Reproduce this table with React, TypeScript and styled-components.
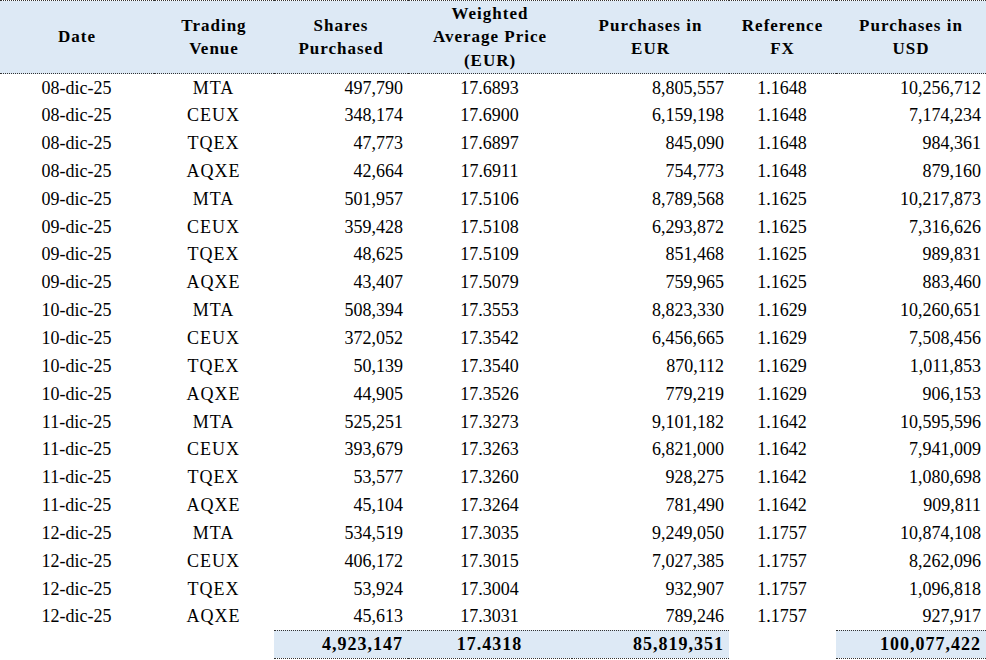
import React from "react"
import styled, { createGlobalStyle } from "styled-components"

const GlobalStyle = createGlobalStyle`
  html, body {
    margin: 0;
    padding: 0;
    background: #ffffff;
  }
  body {
    font-family: "Liberation Serif", "Times New Roman", serif;
    color: #000000;
  }
`

type Align = "left" | "center" | "right"

type Row = {
  date: string
  venue: string
  shares: string
  price: string
  eur: string
  fx: string
  usd: string
}

const rows: Row[] = [
  { date: "08-dic-25", venue: "MTA", shares: "497,790", price: "17.6893", eur: "8,805,557", fx: "1.1648", usd: "10,256,712" },
  { date: "08-dic-25", venue: "CEUX", shares: "348,174", price: "17.6900", eur: "6,159,198", fx: "1.1648", usd: "7,174,234" },
  { date: "08-dic-25", venue: "TQEX", shares: "47,773", price: "17.6897", eur: "845,090", fx: "1.1648", usd: "984,361" },
  { date: "08-dic-25", venue: "AQXE", shares: "42,664", price: "17.6911", eur: "754,773", fx: "1.1648", usd: "879,160" },
  { date: "09-dic-25", venue: "MTA", shares: "501,957", price: "17.5106", eur: "8,789,568", fx: "1.1625", usd: "10,217,873" },
  { date: "09-dic-25", venue: "CEUX", shares: "359,428", price: "17.5108", eur: "6,293,872", fx: "1.1625", usd: "7,316,626" },
  { date: "09-dic-25", venue: "TQEX", shares: "48,625", price: "17.5109", eur: "851,468", fx: "1.1625", usd: "989,831" },
  { date: "09-dic-25", venue: "AQXE", shares: "43,407", price: "17.5079", eur: "759,965", fx: "1.1625", usd: "883,460" },
  { date: "10-dic-25", venue: "MTA", shares: "508,394", price: "17.3553", eur: "8,823,330", fx: "1.1629", usd: "10,260,651" },
  { date: "10-dic-25", venue: "CEUX", shares: "372,052", price: "17.3542", eur: "6,456,665", fx: "1.1629", usd: "7,508,456" },
  { date: "10-dic-25", venue: "TQEX", shares: "50,139", price: "17.3540", eur: "870,112", fx: "1.1629", usd: "1,011,853" },
  { date: "10-dic-25", venue: "AQXE", shares: "44,905", price: "17.3526", eur: "779,219", fx: "1.1629", usd: "906,153" },
  { date: "11-dic-25", venue: "MTA", shares: "525,251", price: "17.3273", eur: "9,101,182", fx: "1.1642", usd: "10,595,596" },
  { date: "11-dic-25", venue: "CEUX", shares: "393,679", price: "17.3263", eur: "6,821,000", fx: "1.1642", usd: "7,941,009" },
  { date: "11-dic-25", venue: "TQEX", shares: "53,577", price: "17.3260", eur: "928,275", fx: "1.1642", usd: "1,080,698" },
  { date: "11-dic-25", venue: "AQXE", shares: "45,104", price: "17.3264", eur: "781,490", fx: "1.1642", usd: "909,811" },
  { date: "12-dic-25", venue: "MTA", shares: "534,519", price: "17.3035", eur: "9,249,050", fx: "1.1757", usd: "10,874,108" },
  { date: "12-dic-25", venue: "CEUX", shares: "406,172", price: "17.3015", eur: "7,027,385", fx: "1.1757", usd: "8,262,096" },
  { date: "12-dic-25", venue: "TQEX", shares: "53,924", price: "17.3004", eur: "932,907", fx: "1.1757", usd: "1,096,818" },
  { date: "12-dic-25", venue: "AQXE", shares: "45,613", price: "17.3031", eur: "789,246", fx: "1.1757", usd: "927,917" },
]

const columns: { key: keyof Row; title: string[]; width: number; align: Align }[] = [
  { key: "date", title: ["Date"], width: 154, align: "center" },
  { key: "venue", title: ["Trading", "Venue"], width: 120, align: "center" },
  { key: "shares", title: ["Shares", "Purchased"], width: 134, align: "right" },
  { key: "price", title: ["Weighted", "Average Price", "(EUR)"], width: 164, align: "center" },
  { key: "eur", title: ["Purchases in", "EUR"], width: 157, align: "right" },
  { key: "fx", title: ["Reference", "FX"], width: 107, align: "center" },
  { key: "usd", title: ["Purchases in", "USD"], width: 150, align: "right" },
]

const totals: Partial<Record<keyof Row, string>> = {
  shares: "4,923,147",
  price: "17.4318",
  eur: "85,819,351",
  usd: "100,077,422",
}

const Sheet = styled.table`
  width: 986px;
  table-layout: fixed;
  border-collapse: collapse;
  border-spacing: 0;
`

const HeadRow = styled.tr`
  height: 73px;
  background: #dde9f5;
`

const HeadCell = styled.th`
  padding: 0;
  border-top: 1px dotted #333333;
  border-bottom: 1px dotted #333333;
  font-size: 17px;
  font-weight: bold;
  letter-spacing: 1px;
  line-height: 23.5px;
  text-align: center;
  vertical-align: middle;
`

const BodyRow = styled.tr`
  height: 27.85px;
`

const Cell = styled.td<{ $align: Align; $spaced?: boolean }>`
  padding: 0 5px 0 4px;
  font-size: 18px;
  line-height: 20px;
  white-space: nowrap;
  text-align: ${(p) => p.$align};
  letter-spacing: ${(p) => (p.$spaced ? "1px" : "0")};
  vertical-align: middle;
`

const TotalRow = styled.tr`
  height: 28px;
`

const TotalCell = styled.td<{ $align: Align; $filled: boolean }>`
  padding: 0 5px 0 4px;
  font-size: 18px;
  font-weight: bold;
  letter-spacing: 1px;
  line-height: 20px;
  white-space: nowrap;
  text-align: ${(p) => p.$align};
  vertical-align: middle;
  background: ${(p) => (p.$filled ? "#dde9f5" : "transparent")};
  border-top: ${(p) => (p.$filled ? "1px dotted #333333" : "none")};
  border-bottom: ${(p) => (p.$filled ? "1px dotted #333333" : "none")};
`

export default function App() {
  return (
    <>
      <GlobalStyle />
      <Sheet>
        <colgroup>
          {columns.map((c) => (
            <col key={c.key} style={{ width: c.width }} />
          ))}
        </colgroup>
        <thead>
          <HeadRow>
            {columns.map((c) => (
              <HeadCell key={c.key}>
                {c.title.map((line, i) => (
                  <React.Fragment key={line}>
                    {i > 0 && <br />}
                    {line}
                  </React.Fragment>
                ))}
              </HeadCell>
            ))}
          </HeadRow>
        </thead>
        <tbody>
          {rows.map((r, i) => (
            <BodyRow key={`row-${i}`}>
              {columns.map((c) => (
                <Cell key={c.key} $align={c.align} $spaced={c.key === "venue"}>
                  {r[c.key]}
                </Cell>
              ))}
            </BodyRow>
          ))}
          <TotalRow>
            {columns.map((c) => (
              <TotalCell key={c.key} $align={c.align} $filled={!!totals[c.key]}>
                {totals[c.key] ?? ""}
              </TotalCell>
            ))}
          </TotalRow>
        </tbody>
      </Sheet>
    </>
  )
}
